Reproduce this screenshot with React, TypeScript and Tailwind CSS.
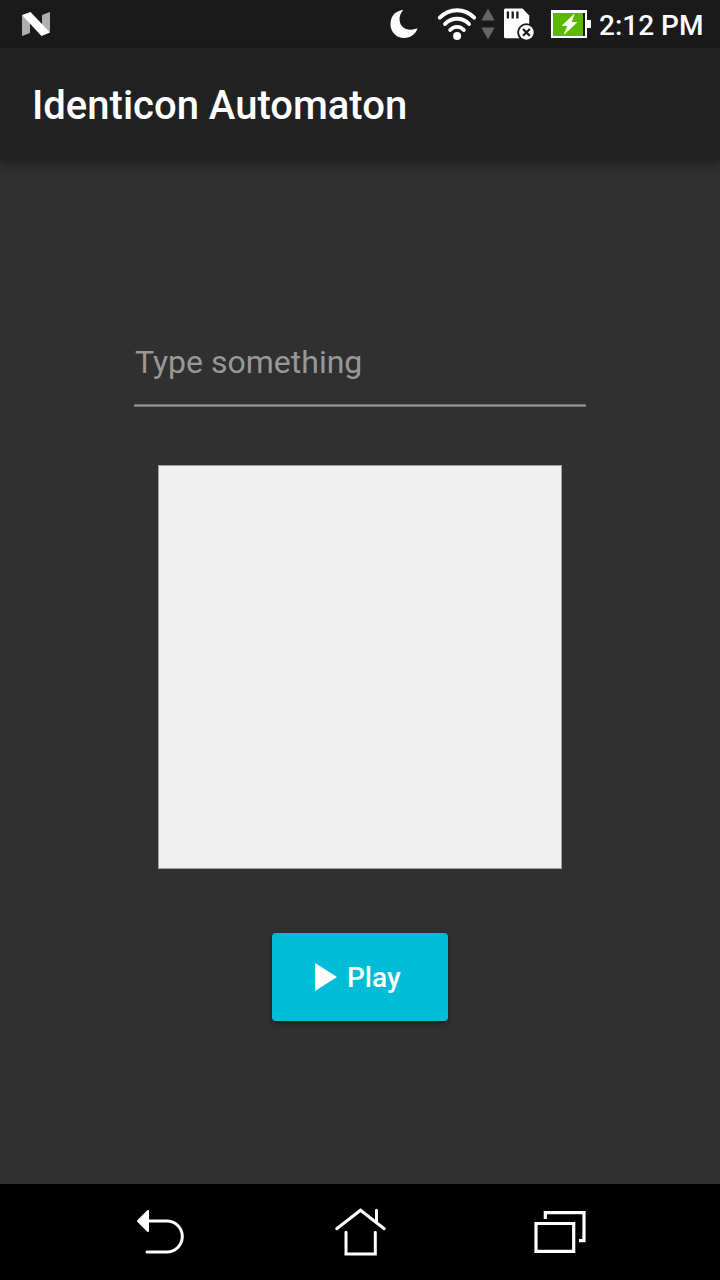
function StatusBar() {
  return (
    <div className="flex h-12 shrink-0 items-center bg-[#1a1a1a] text-white">
      <svg className="ml-5 h-12 w-8" viewBox="20 0 32 48">
        <path d="M22 15v21l8-3V20zM50 12l-8 3v14l8 3z" fill="#aeaeae" />
        <path d="M22 15l8.500-3 19.500 20.500-8.500 3.500z" fill="#fff" />
      </svg>
      <div className="ml-auto flex items-center">
        <svg className="h-12 w-[34px]" viewBox="386 0 34 48">
          <path d="M403.500 10C394 11 390.500 17 390.500 24.500C390.500 32 396.500 38 404 38C410.500 38 416 34 417.500 28.300C412 30.600 405.500 30 402.300 26.500C398.300 22 398.700 14.500 403.500 10Z" fill="#fff" />
        </svg>
        <svg className="ml-4 h-12 w-[60px]" viewBox="436 0 60 48">
          <g fill="none" stroke="#fff" strokeWidth="3.900" strokeLinecap="round">
            <path d="M439.800 17.700C449.500 7.700 464.500 7.700 474.200 17.700" />
            <path d="M445 24C451.500 17 462.500 17 469 24" />
            <path d="M450.200 30C453.800 25.800 460.200 25.800 463.800 30" />
          </g>
          <circle cx="457.100" cy="36" r="4" fill="#fff" />
          <path d="M488 8.500L494.700 20.500H481.300ZM481.300 27.500H494.700L488 39.500Z" fill="#656565" />
        </svg>
        <svg className="ml-[6px] h-12 w-[34px]" viewBox="502 0 34 48">
          <path d="M505.500 8.500H522.500L529.200 15.500V38.200H505.500Q504 38.200 504 36.700V10Q504 8.500 505.500 8.500Z" fill="#fff" />
          <path d="M507.900 11.500v7M512.700 11.500v7M517.400 11.500v7" stroke="#1a1a1a" strokeWidth="2.300" />
          <circle cx="526.400" cy="32.400" r="9.200" fill="#1a1a1a" />
          <circle cx="526.400" cy="32.400" r="7.300" fill="#fff" />
          <path d="M523 29l6.800 6.800M529.800 29l-6.800 6.800" stroke="#1a1a1a" strokeWidth="2.200" />
        </svg>
        <svg className="ml-[14px] h-12 w-[42px]" viewBox="550 0 42 48">
          <path d="M551 10h36v10h4v8h-4v10h-36z" fill="#fff" />
          <path d="M553 13h32v23h-32z" fill="#1a1a1a" />
          <path d="M553 13h30v23h-30z" fill="#5db900" />
          <path d="M574 14.500L562.300 25.500H568L564.300 34L576.700 22.500H571Z" fill="#fff" stroke="#fff" strokeWidth="0.800" strokeLinejoin="round" />
        </svg>
        <span className="ml-[7px] w-[121px] whitespace-nowrap pt-1 text-[28px] leading-none font-medium">2:12 PM</span>
      </div>
    </div>
  );
}

function NavigationBar() {
  return (
    <nav className="flex h-24 shrink-0 items-center bg-black px-[120px] pt-[6px]">
      <button aria-label="Back">
        <svg className="size-20" viewBox="0 0 80 80" fill="none">
          <path d="M27 57H46.800A15.500 15.500 0 0 0 46.800 26H27" stroke="#fff" strokeWidth="3" strokeLinecap="round" />
          <path d="M18 26L28 16V36Z" fill="#fff" stroke="#fff" strokeWidth="2" strokeLinejoin="round" />
        </svg>
      </button>
      <button aria-label="Home" className="ml-[120px]">
        <svg className="size-20" viewBox="0 0 80 80" fill="none" stroke="#fff" strokeWidth="3" strokeLinecap="round">
          <path d="M16.700 33.700L40.500 15.200L64.300 33.700M56.500 15.200V27M26 37.300V59H55.300V37.300" />
        </svg>
      </button>
      <button aria-label="Recent apps" className="ml-[120px]">
        <svg className="size-20" viewBox="0 0 80 80" fill="none" stroke="#fff" strokeWidth="3.200">
          <path d="M16 28.500h37.700v27.800h-37.700zM25.300 24v-6.300h38.700v28h-5" />
        </svg>
      </button>
    </nav>
  );
}

export default function App() {
  return (
    <div className="flex h-[1280px] w-[720px] flex-col overflow-hidden bg-[#303030] font-['Roboto',sans-serif]">
      <StatusBar />
      <header className="flex h-28 shrink-0 items-center bg-[#212121] px-8 pt-1 shadow-[0_4px_10px_rgba(0,0,0,0.38)]">
        <h1 className="text-[40px] leading-none font-medium text-white">Identicon Automaton</h1>
      </header>
      <main className="flex flex-1 flex-col items-center pt-[174px]">
        <input
          aria-label="Type something"
          placeholder="Type something"
          className="h-[70px] w-[452px] bg-transparent pb-[15px] pl-px text-[32px] text-white outline-none placeholder:text-[#989898]"
        />
        <div className="h-[3px] w-[452px] border-y border-[#6e6e6e] bg-[#989898]" />
        <div className="mt-[58px] size-[404px] shrink-0 border border-[#a0a0a0] bg-[#f0f0f0]" />
        <button className="mt-16 flex h-[88px] w-44 items-center rounded bg-[#00bcd7] pl-[43px] text-white shadow-[0_3px_5px_rgba(0,0,0,0.35)]">
          <svg className="h-7 w-[22px]" viewBox="0 0 22 28">
            <path d="M0 0L22 14L0 28Z" fill="#fff" />
          </svg>
          <span className="ml-[10px] pt-[2px] text-[28px] leading-none font-medium">Play</span>
        </button>
      </main>
      <NavigationBar />
    </div>
  );
}
